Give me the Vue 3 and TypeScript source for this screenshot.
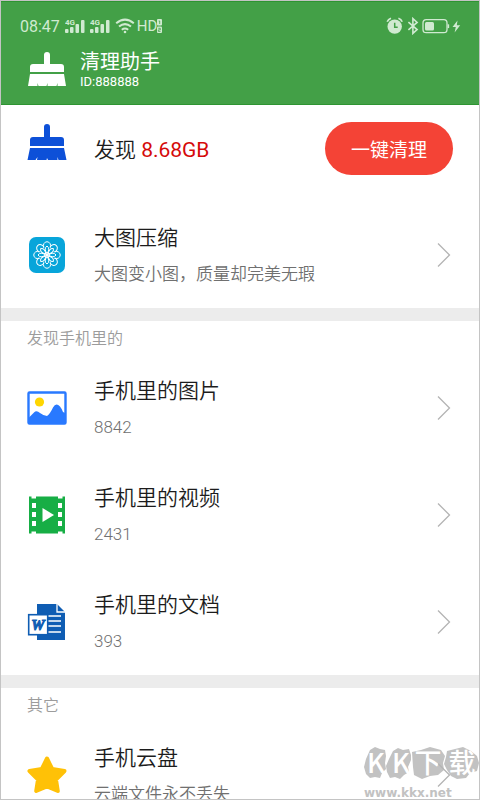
<script setup lang="ts">
type IconName = 'compress' | 'picture' | 'video' | 'document' | 'star'

interface Entry {
  icon: IconName
  title: string
  detail: string
}

interface Group {
  label: string
  entries: Entry[]
}

const compress: Entry = { icon: 'compress', title: '大图压缩', detail: '大图变小图，质量却完美无瑕' }

const groups: Group[] = [
  { label: '', entries: [compress] },
  {
    label: '发现手机里的',
    entries: [
      { icon: 'picture', title: '手机里的图片', detail: '8842' },
      { icon: 'video', title: '手机里的视频', detail: '2431' },
      { icon: 'document', title: '手机里的文档', detail: '393' },
    ],
  },
  {
    label: '其它',
    entries: [{ icon: 'star', title: '手机云盘', detail: '云端文件永不丢失' }],
  },
]

const petals = [0, 45, 90, 135, 180, 225, 270, 315]
const holes = [8, 17, 26]
</script>

<template>
  <div class="screen">
    <header class="top">
      <div class="status">
        <span class="clock">08:47</span>
        <svg v-for="n in 2" :key="n" class="signal" width="21" height="16" viewBox="0 0 21 16" fill="currentColor">
          <text x="0" y="7" class="tiny">4G</text>
          <rect x="0" y="11" width="3.5" height="4" rx="1" />
          <rect x="5" y="9" width="3.5" height="6" rx="1" />
          <rect x="10.5" y="6" width="3.5" height="9" rx="1" />
          <rect x="16" y="2" width="3.5" height="13" rx="1" />
        </svg>
        <svg class="wifi" width="20" height="16" viewBox="0 0 20 16" fill="none" stroke="currentColor" stroke-width="2">
          <path d="M1.2 5.3Q10-2 18.8 5.3M4 8.6Q10 3.6 16 8.6M6.8 11.7Q10 9.2 13.2 11.7" />
          <circle cx="10" cy="14" r="1.3" fill="currentColor" stroke="none" />
        </svg>
        <span class="hd">HD</span>
        <svg class="sims" width="6" height="16" viewBox="0 0 6 16">
          <rect x="0" y="1" width="5" height="6.5" rx="1" fill="currentColor" />
          <rect x="0" y="8.5" width="5" height="6.5" rx="1" fill="currentColor" />
          <path d="M1.7 3h1v3M1.3 10.3h2v1.6h-2v1.5h2.2" fill="none" stroke="#43a047" stroke-width=".8" />
        </svg>
        <svg class="right" width="75" height="18" viewBox="0 0 75 18" fill="none" stroke="currentColor">
          <circle cx="8.7" cy="9.6" r="7.2" fill="currentColor" stroke="none" />
          <path d="M1.2 4.8Q2.2 2.2 5 1.2M12.4 1.2Q15.2 2.2 16.2 4.8" stroke-width="1.7" />
          <path d="M8.7 5.7v4.5h3" stroke="#43a047" stroke-width="1.5" />
          <path d="M22.4 5.2l8.7 7.4-4.2 3.8V1.6l4.2 3.8-8.7 7.4" stroke-width="1.6" />
          <rect x="37" y="2.7" width="24" height="13" rx="3.2" stroke-width="1.3" />
          <rect x="39" y="5" width="9" height="8.5" rx="1.5" fill="currentColor" stroke="none" />
          <path d="M62.4 7.3v3.8" stroke-width="1.5" />
          <path d="M71.5 3.6L66.5 10h3.3l-1.2 5.5 5.6-7.2h-3.4z" fill="currentColor" stroke="none" />
        </svg>
      </div>
      <div class="brand">
        <svg class="icon" width="40" height="40" viewBox="0 0 40 40" fill="currentColor">
          <path d="M17 14V5a3 3 0 0 1 6 0v9h11q3 0 3 3v5H3v-5q0-3 3-3zM3 24h34l2 12H30.5v-3l-1 3H20.5v-3l-1 3H11.5l-1-3v3H1z" />
        </svg>
        <div>
          <h1>清理助手</h1>
          <p>ID:888888</p>
        </div>
      </div>
    </header>

    <main>
      <div class="found">
        <svg class="icon blue" width="40" height="40" viewBox="0 0 40 40" fill="currentColor">
          <path d="M17 15V5a3 3 0 0 1 6 0v10h11q3 0 3 3v6H3v-6q0-3 3-3zM3 26h34l2.5 12H31.5l-1-3v3H21l-1-2-.5 2H10l.5-3-2 3H.5z" />
        </svg>
        <p>发现 <strong>8.68GB</strong></p>
        <button type="button">一键清理</button>
      </div>

      <section v-for="group in groups" :key="group.label" :class="{ divided: group.label }">
        <h2 v-if="group.label">{{ group.label }}</h2>
        <a v-for="entry in group.entries" :key="entry.title" class="row" href="#">
          <svg v-if="entry.icon === 'compress'" class="icon" width="40" height="40" viewBox="0 0 40 40">
            <rect x="2" y="2" width="36" height="36" rx="7" fill="#08a5da" />
            <g fill="none" stroke="#fff" stroke-width="1">
              <g v-for="angle in petals" :key="angle" :transform="`rotate(${angle} 20 20)`">
                <path d="M20 18.5Q16.4 13.5 20 11Q23.6 13.5 20 18.5" />
                <path d="M16.6 12.6A3.7 4.2 0 1 1 23.4 12.6" />
              </g>
              <circle cx="20" cy="20" r="1.2" fill="#fff" />
            </g>
          </svg>
          <svg v-else-if="entry.icon === 'picture'" class="icon" width="40" height="40" viewBox="0 0 40 40">
            <rect x="1.5" y="4.5" width="37" height="31" rx="1" fill="#fff" stroke="#2979ff" stroke-width="2.4" />
            <circle cx="12.5" cy="14" r="4.6" fill="#ffd600" />
            <path d="M2 29.5L7 24.5Q9.5 22 13 25Q17 28 20 28Q23 26 26 19.5Q29 14 33 18.5Q35 21 36 24L38 25V35H2z" fill="#2979ff" />
          </svg>
          <svg v-else-if="entry.icon === 'video'" class="icon" width="40" height="40" viewBox="0 0 40 40">
            <path d="M2 1.5h2.5V3.5H9V1.5h22V3.5h4.5V1.5H38v37h-2.5v-2H31v2H9v-2H4.500v2H2z" fill="#17ae45" />
            <g fill="#fff">
              <template v-for="y in holes" :key="y">
                <rect x="5" :y="y" width="4" height="5" />
                <rect x="31" :y="y" width="4" height="5" />
              </template>
              <path d="M15.5 13v14L27 20z" />
            </g>
          </svg>
          <svg v-else-if="entry.icon === 'document'" class="icon" width="40" height="40" viewBox="0 0 40 40">
            <path d="M10 2h20l8 8v28H10z" fill="#0f5db3" />
            <path d="M30 2v8h8" fill="none" stroke="#fff" stroke-width="1.3" />
            <path d="M21 14h13M21 19h13M21 24h13M21 30h13" stroke="#fff" stroke-width="1.5" />
            <rect x="1.7" y="12.7" width="19" height="20" fill="#fff" stroke="#0f5db3" stroke-width="1.6" />
            <text x="10.8" y="28" class="word">W</text>
          </svg>
          <svg v-else class="icon" width="40" height="40" viewBox="0 0 40 40">
            <path d="M20 3.500L25.2 14L37.5 16L29 24.5L30.8 36L20 31.500L9.200 36L11 24.5L2.5 16L14.8 14z" fill="#ffc107" stroke="#ffc107" stroke-width="4" stroke-linejoin="round" />
          </svg>
          <span class="text">
            <span class="title">{{ entry.title }}</span>
            <span class="detail">{{ entry.detail }}</span>
          </span>
          <svg class="chevron" width="14" height="26" viewBox="0 0 14 26" fill="none" stroke="#b4b4b4" stroke-width="1.3">
            <path d="M1 1.5L12.5 13L1 24.5" />
          </svg>
        </a>
      </section>
    </main>

    <div class="watermark">
      <svg width="117" height="34" viewBox="0 0 117 34">
        <path d="M8 3l5-3 5 2 5 1 1 6-1 7 1 6-4 4-2 5-5-1-5 1-4-4-2-7 2-8zM31 4l5-3 5 2 6-1 2 6 0 5-3 7 1 5-5 3-4 4-5-2-5 1-3-6-1-6 3-7zM50 5l9-2 9-3 11 3 4 6-2 7 1 7-6 5-8 1-8 3-8-4-1-8zM85 4l8-2 8-2 8 4 6 5 2 7-2 8-7 2-4 5-9 1-6-3-4-6-3-6 2-7z" fill="#c2c2c2" />
        <g class="mark">
          <text x="14" y="26">K</text>
          <text x="39" y="26">K</text>
          <text x="66" y="26">下</text>
          <text x="100" y="26">载</text>
        </g>
      </svg>
      <span>www.kkx.net</span>
    </div>
  </div>
</template>

<style>
body {
  margin: 0;
  background: #fff;
}
</style>

<style scoped>
.screen {
  position: relative;
  box-sizing: border-box;
  height: 100vh;
  overflow: hidden;
  border: 1px solid #c4c4c4;
  background: #fff;
  color: #1c1c1c;
  font-family: Roboto, "Noto Sans CJK SC", sans-serif;
}
h1, h2, p {
  margin: 0;
  font-weight: 400;
}
.icon {
  flex: none;
}
.top {
  box-sizing: border-box;
  height: 104px;
  padding: 14px 18px 0 19px;
  background: #43a047;
  border-top: 1px solid #2e9432;
  border-bottom: 1px solid #2e9432;
  color: #fff;
}
.status {
  display: flex;
  align-items: center;
  height: 20px;
  color: #d0ead1;
}
.clock {
  margin-right: 5px;
  font-size: 16px;
}
.signal {
  margin-right: 4px;
}
.tiny {
  font: 700 8px Roboto, sans-serif;
}
.hd {
  margin-left: 2px;
  font-size: 15px;
}
.right {
  margin-left: auto;
}
.brand {
  display: flex;
  align-items: center;
  gap: 13px;
  margin-top: 14px;
  padding-left: 7px;
}
.brand h1 {
  font-size: 20px;
  line-height: 24px;
}
.brand p {
  font-size: 13px;
  line-height: 16px;
}
.found {
  display: flex;
  align-items: center;
  gap: 27px;
  height: 86px;
  margin-bottom: 10px;
  padding: 0 26px;
}
.blue {
  color: #0d50d8;
  margin-bottom: 12px;
}
.found p {
  flex: 1;
  font-size: 21px;
  font-weight: 350;
}
.found strong {
  color: #d50a0a;
  font-weight: 400;
}
.found button {
  width: 128px;
  height: 53px;
  padding: 0;
  border: 0;
  border-radius: 27px;
  background: #f44336;
  color: #fff;
  font: inherit;
  font-size: 19px;
}
.divided {
  border-top: 13px solid #ececec;
}
h2 {
  padding: 3px 26px 0;
  color: #9c9c9c;
  font-size: 16px;
  font-weight: 350;
  line-height: 30px;
}
.row {
  display: flex;
  align-items: center;
  gap: 27px;
  height: 107px;
  padding: 0 28px 0 26px;
  color: inherit;
  text-decoration: none;
}
.text {
  display: flex;
  flex: 1;
  flex-direction: column;
  padding-top: 2px;
  font-weight: 350;
  line-height: 36px;
}
.title {
  font-size: 21px;
}
.detail {
  color: #707070;
  font-size: 17px;
}
.word {
  fill: #0f5db3;
  stroke: #0f5db3;
  font: italic 700 15px "Liberation Serif", serif;
  text-anchor: middle;
}
.chevron {
  position: relative;
  z-index: 1;
  flex: none;
}
.watermark {
  position: absolute;
  right: 0;
  bottom: 0;
  display: flex;
  flex-direction: column;
  width: 117px;
  color: #c2c2c2;
  font: 700 12px/12px "DejaVu Sans", sans-serif;
}
.watermark svg {
  overflow: visible;
}
.watermark span {
  padding: 6px 0 0 2px;
}
.mark {
  fill: #fff;
  font: 500 27px "Noto Sans CJK SC", sans-serif;
  text-anchor: middle;
}
</style>
